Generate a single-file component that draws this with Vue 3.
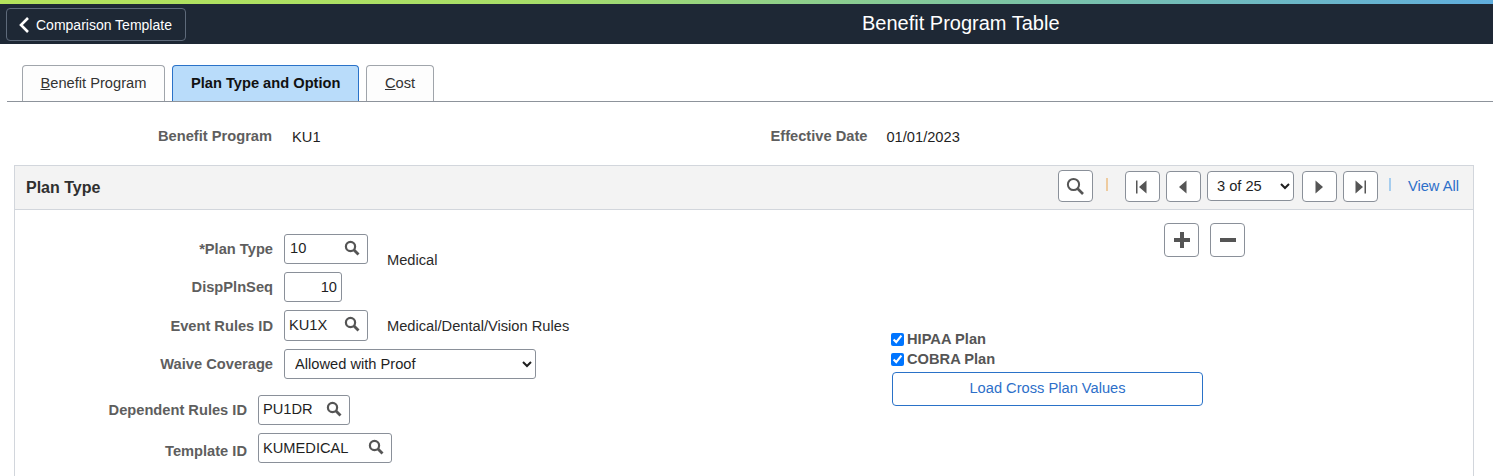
<template>
  <div class="page">
    <div class="accent-bar"></div>
    <header class="banner">
      <button class="back-btn">
        <svg width="12" height="18" viewBox="0 0 12 18"><path d="M10 2 3 9l7 7" fill="none" stroke="#fff" stroke-width="2.6" /></svg>
        <span>Comparison Template</span>
      </button>
      <h1 class="banner-title">Benefit Program Table</h1>
    </header>

    <nav class="tabs">
      <a class="tab"><u>B</u>enefit Program</a>
      <a class="tab active">Plan Type and Option</a>
      <a class="tab"><u>C</u>ost</a>
    </nav>

    <div class="summary">
      <span class="label summary-first">Benefit Program</span>
      <span class="summary-value">KU1</span>
      <span class="label summary-second">Effective Date</span>
      <span class="summary-value date">01/01/2023</span>
    </div>

    <section class="panel">
      <div class="panel-head">
        <h2>Plan Type</h2>
        <div class="pager">
          <button class="icon-btn find">
            <svg width="18" height="18" viewBox="0 0 18 18"><circle cx="7.5" cy="7.5" r="5.6" fill="none" stroke="#555" stroke-width="2" /><path d="m11.5 11.5 5.5 5.5" stroke="#555" stroke-width="2.6" /></svg>
          </button>
          <i class="sep orange"></i>
          <button class="icon-btn">
            <svg width="16" height="16" viewBox="0 0 16 16"><path d="M2 1.5h1.5v13H2zM12.5 1.5v13L5 8z" fill="#555" /></svg>
          </button>
          <button class="icon-btn">
            <svg width="16" height="16" viewBox="0 0 16 16"><path d="M11.5 1.5v13L4 8z" fill="#555" /></svg>
          </button>
          <select class="page-select">
            <option>3 of 25</option>
          </select>
          <button class="icon-btn next">
            <svg width="16" height="16" viewBox="0 0 16 16"><path d="M4.5 1.5v13L12 8z" fill="#555" /></svg>
          </button>
          <button class="icon-btn">
            <svg width="16" height="16" viewBox="0 0 16 16"><path d="M3.5 1.5v13L11 8zM12.5 1.5H14v13h-1.5z" fill="#555" /></svg>
          </button>
          <i class="sep blue"></i>
          <a class="view-all">View All</a>
        </div>
      </div>

      <div class="panel-body">
        <div class="form-col">
          <div class="row row-plan">
            <label class="label">*Plan Type</label>
            <div class="lookup w84">
              <input value="10" readonly />
              <svg class="glass" width="16" height="16" viewBox="0 0 16 16"><circle cx="6.5" cy="6.5" r="4.6" fill="none" stroke="#555" stroke-width="2.2" /><path d="m10 10 4.5 4.5" stroke="#555" stroke-width="2.8" /></svg>
            </div>
            <span class="desc shifted">Medical</span>
          </div>
          <div class="row">
            <label class="label">DispPlnSeq</label>
            <input class="plain-input" value="10" readonly />
          </div>
          <div class="row row-tall">
            <label class="label">Event Rules ID</label>
            <div class="lookup w84 tall">
              <input class="tight" value="KU1X" readonly />
              <svg class="glass" width="16" height="16" viewBox="0 0 16 16"><circle cx="6.5" cy="6.5" r="4.6" fill="none" stroke="#555" stroke-width="2.2" /><path d="m10 10 4.5 4.5" stroke="#555" stroke-width="2.8" /></svg>
            </div>
            <span class="desc">Medical/Dental/Vision Rules</span>
          </div>
          <div class="row">
            <label class="label">Waive Coverage</label>
            <select class="waive">
              <option>Allowed with Proof</option>
            </select>
          </div>

          <div class="row narrow first-narrow">
            <label class="label">Dependent Rules ID</label>
            <div class="lookup w92">
              <input class="tight" value="PU1DR" readonly />
              <svg class="glass" width="16" height="16" viewBox="0 0 16 16"><circle cx="6.5" cy="6.5" r="4.6" fill="none" stroke="#555" stroke-width="2.2" /><path d="m10 10 4.5 4.5" stroke="#555" stroke-width="2.8" /></svg>
            </div>
          </div>
          <div class="row narrow">
            <label class="label low">Template ID</label>
            <div class="lookup w134">
              <input class="tight" value="KUMEDICAL" readonly />
              <svg class="glass" width="16" height="16" viewBox="0 0 16 16"><circle cx="6.5" cy="6.5" r="4.6" fill="none" stroke="#555" stroke-width="2.2" /><path d="m10 10 4.5 4.5" stroke="#555" stroke-width="2.8" /></svg>
            </div>
          </div>
        </div>

        <div class="side-col">
          <div class="row-actions">
            <button class="icon-btn square">
              <svg width="18" height="18" viewBox="0 0 18 18"><path d="M7 1h4v6h6v4h-6v6H7v-6H1V7h6z" fill="#555" /></svg>
            </button>
            <button class="icon-btn square">
              <svg width="18" height="18" viewBox="0 0 18 18"><path d="M1 7h16v4H1z" fill="#555" /></svg>
            </button>
          </div>
          <label class="check first-check"><input type="checkbox" checked />HIPAA Plan</label>
          <label class="check"><input type="checkbox" checked />COBRA Plan</label>
          <button class="load-btn">Load Cross Plan Values</button>
        </div>
      </div>
    </section>
  </div>
</template>

<script setup>
</script>

<style>
html, body {
  margin: 0;
  background: #fff;
  overflow: hidden;
}
</style>

<style scoped>
.page {
  font-family: "Liberation Sans", Arial, sans-serif;
  font-size: 14.67px;
  color: #1f1f1f;
  height: 476px;
  overflow: hidden;
}

.accent-bar {
  height: 4px;
  background: linear-gradient(90deg, #b4e35c 0%, #a8de68 35%, #7fc6a0 65%, #60aede 100%);
}

.banner {
  height: 40px;
  background: #1e2835;
  display: flex;
  align-items: flex-start;
  padding-left: 6px;
}

.back-btn {
  width: 180px;
  height: 33px;
  margin-top: 4px;
  padding: 0 0 0 11px;
  background: transparent;
  border: 1px solid #5e6a7a;
  border-radius: 4px;
  color: #fff;
  font: 14px "Liberation Sans", Arial, sans-serif;
  display: flex;
  align-items: center;
  gap: 6px;
}

.banner-title {
  margin: 9px 0 0 676px;
  font-size: 20px;
  font-weight: 400;
  line-height: 20px;
  color: #fff;
}

.tabs {
  display: flex;
  gap: 7px;
  margin: 21px 0 0 7px;
  padding-left: 15px;
  height: 36px;
  border-bottom: 1px solid #8d939b;
}

.tab {
  height: 36px;
  box-sizing: border-box;
  padding: 0 17.5px;
  line-height: 35px;
  border: 1px solid #a0a5ab;
  border-bottom: 0;
  border-radius: 4px 4px 0 0;
  background: #fdfdfd;
  color: #333;
}

.tab.active {
  padding: 0 18px;
  background: #b9dcfa;
  border-color: #2a72c8;
  font-weight: 700;
  color: #111;
}

.label {
  font-weight: 700;
  color: #5e5e5e;
}

.summary {
  display: flex;
  height: 63px;
  align-items: flex-start;
  padding-top: 26px;
  box-sizing: border-box;
  line-height: 16px;
}

.summary-first {
  margin-left: 158px;
}

.summary-value {
  margin-left: 20px;
  padding-top: 1px;
}

.summary-second {
  margin-left: 450px;
}

.summary-value.date {
  margin-left: 19px;
}

.panel {
  margin: 0 19px 0 14px;
  border: 1px solid #d2d6dc;
  border-bottom: 0;
  height: 320px;
}

.panel-head {
  height: 43px;
  background: #f3f3f3;
  border-bottom: 1px solid #d2d6dc;
  display: flex;
  justify-content: space-between;
  align-items: flex-start;
}

.panel-head h2 {
  margin: 13px 0 0 11px;
  font-size: 16px;
  line-height: 18px;
  font-weight: 700;
  color: #2f2f2f;
}

.pager {
  display: flex;
  align-items: flex-start;
  padding: 5px 14px 0 0;
  gap: 6px;
}

.icon-btn {
  width: 35px;
  height: 31px;
  padding: 0;
  background: #fff;
  border: 1px solid #8a9099;
  border-radius: 4px;
  display: flex;
  align-items: center;
  justify-content: center;
}

.icon-btn.find {
  height: 32px;
  margin-top: -1px;
}

.icon-btn.next {
  margin-left: 2px;
}

.sep {
  width: 2px;
  height: 13px;
  margin-top: 7px;
}

.sep.orange {
  margin-left: 7px;
  margin-right: 11px;
  background: #eecb9f;
}

.sep.blue {
  margin-left: 5px;
  margin-right: 11px;
  background: #a6cdee;
}

.page-select {
  width: 87px;
  height: 30px;
  padding-left: 5px;
  background: #fff;
  border: 1px solid #8a9099;
  border-radius: 4px;
  font: 14.67px "Liberation Sans", Arial, sans-serif;
  color: #1f1f1f;
}

.view-all {
  margin-top: 7px;
  color: #2d6fc9;
  line-height: 16px;
}

.panel-body {
  display: flex;
}

.form-col {
  width: 875px;
  padding-top: 24px;
  flex-shrink: 0;
}

.row {
  display: flex;
  align-items: center;
  height: 30px;
  margin-bottom: 8px;
}

.row-tall {
  height: 31px;
}

.row .label {
  width: 258px;
  text-align: right;
  margin-right: 11px;
  flex-shrink: 0;
}

.row.narrow .label {
  width: 232px;
}

.row .label.low {
  margin-top: 6px;
}

.first-narrow {
  margin-top: 16px;
}

.lookup {
  position: relative;
  height: 30px;
  box-sizing: border-box;
  flex-shrink: 0;
  background: #fff;
  border: 1px solid #8a9099;
  border-radius: 3px;
}

.lookup.tall {
  height: 31px;
}

.w84 {
  width: 84px;
}

.w92 {
  width: 92px;
}

.w134 {
  width: 134px;
}

.lookup input {
  width: 60px;
  height: 100%;
  box-sizing: border-box;
  border: 0;
  outline: 0;
  padding: 0 0 2px 5px;
  background: transparent;
  font: 14.67px "Liberation Sans", Arial, sans-serif;
  color: #1f1f1f;
}

.lookup input.tight {
  padding-left: 4px;
  width: 100px;
}

.w134 input.tight {
  padding-bottom: 0;
}

.glass {
  position: absolute;
  right: 7px;
  top: 5px;
}

.plain-input {
  width: 58px;
  height: 30px;
  box-sizing: border-box;
  border: 1px solid #8a9099;
  border-radius: 3px;
  padding: 0 4px 0 0;
  text-align: right;
  outline: 0;
  font: 14.67px "Liberation Sans", Arial, sans-serif;
  color: #1f1f1f;
}

.desc {
  margin-left: 19px;
  color: #2a2a2a;
  white-space: nowrap;
}

.desc.shifted {
  margin-top: 22px;
}

.waive {
  width: 252px;
  height: 30px;
  padding-left: 6px;
  background: #fff;
  border: 1px solid #8a9099;
  border-radius: 3px;
  font: 14.67px "Liberation Sans", Arial, sans-serif;
  color: #1f1f1f;
}

.side-col {
  display: flex;
  flex-direction: column;
  align-items: flex-start;
}

.row-actions {
  display: flex;
  gap: 11px;
  margin: 13px 0 0 274px;
}

.icon-btn.square {
  height: 34px;
}

.check {
  display: flex;
  align-items: center;
  height: 20px;
  font-weight: 700;
  color: #555;
  line-height: 20px;
}

.check input {
  width: 13px;
  height: 13px;
  margin: 0 3px 0 1px;
}

.first-check {
  margin-top: 72px;
}

.load-btn {
  width: 311px;
  height: 34px;
  margin: 3px 0 0 2px;
  padding: 0 0 2px;
  background: #fff;
  border: 1px solid #2a72c8;
  border-radius: 4px;
  color: #2d6fc9;
  font: 14.67px "Liberation Sans", Arial, sans-serif;
}
</style>
